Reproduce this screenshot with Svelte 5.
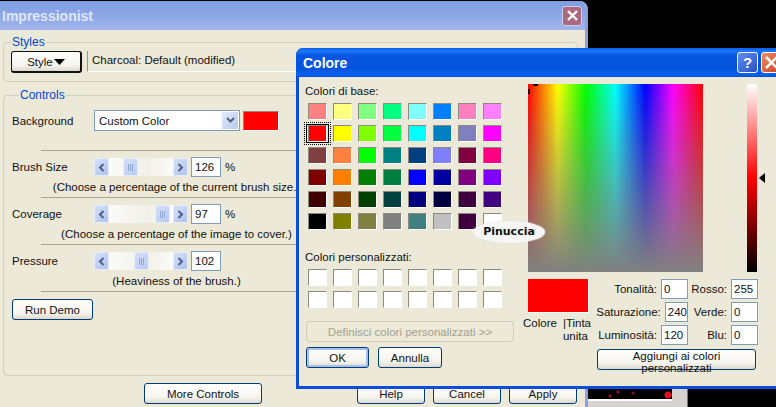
<script>
    const basic = [
        '#ff8080', '#ffff80', '#80ff80', '#00ff80', '#80ffff', '#0080ff', '#ff80c0', '#ff80ff',
        '#ff0000', '#ffff00', '#80ff00', '#00ff40', '#00ffff', '#0080c0', '#8080c0', '#ff00ff',
        '#804040', '#ff8040', '#00ff00', '#008080', '#004080', '#8080ff', '#800040', '#ff0080',
        '#800000', '#ff8000', '#008000', '#008040', '#0000ff', '#0000a0', '#800080', '#8000ff',
        '#400000', '#804000', '#004000', '#004040', '#000080', '#000040', '#400040', '#400080',
        '#000000', '#808000', '#808040', '#808080', '#408080', '#c0c0c0', '#400040', '#ffffff'
    ];
    const custom = Array(16).fill('#ffffff');

    const sliders = [
        { label: 'Brush Size', pos: 14, value: '126', unit: '%', hint: '(Choose a percentage of the current brush size.)' },
        { label: 'Coverage', pos: 46, value: '97', unit: '%', hint: '(Choose a percentage of the image to cover.)' },
        { label: 'Pressure', pos: 25, value: '102', unit: '', hint: '(Heaviness of the brush.)' }
    ];

    const hsl = [['Tonalità:', '0'], ['Saturazione:', '240'], ['Luminosità:', '120']];
    const rgb = [['Rosso:', '255'], ['Verde:', '0'], ['Blu:', '0']];
</script>

<div class="desktop">
    <div class="backdrop">
        <div class="thumbs"></div>
        <div class="strip"></div>
    </div>

    <div class="window main">
        <div class="titlebar inactive">
            <span class="title">Impressionist</span>
            <span class="close faded">
                <svg width="13" height="13" viewBox="0 0 13 13"><path d="M2 2l9 9M11 2l-9 9" stroke="#fff" stroke-width="2.4" /></svg>
            </span>
        </div>
        <div class="main-body">
            <fieldset class="group styles">
                <legend>Styles</legend>
                <div class="style-row">
                    <button class="btn dark style-btn">Style<svg width="11" height="6" viewBox="0 0 11 6"><path d="M0 0h11L5.500 6z" fill="#000" /></svg></button>
                    <div class="style-name">Charcoal: Default (modified)</div>
                </div>
            </fieldset>

            <fieldset class="group controls">
                <legend>Controls</legend>
                <div class="bg-row">
                    <span class="label">Background</span>
                    <div class="combo">
                        <span>Custom Color</span>
                        <span class="combo-btn">
                            <svg width="9" height="7" viewBox="0 0 9 7"><path d="M1 1l3.500 3.500L8 1" fill="none" stroke="#4d6185" stroke-width="2" /></svg>
                        </span>
                    </div>
                    <div class="bg-swatch"></div>
                </div>
                {#each sliders as s}
                    <div class="sep"></div>
                    <div class="slider-block">
                        <div class="slider-row">
                            <span class="label">{s.label}</span>
                            <span class="sb-btn">
                                <svg width="7" height="9" viewBox="0 0 7 9"><path d="M5.500 1L2 4.500 5.500 8" fill="none" stroke="#4d6185" stroke-width="2" /></svg>
                            </span>
                            <div class="track">
                                <span class="thumb" style="margin-left: {s.pos}px">
                                    <svg width="6" height="7" viewBox="0 0 6 7"><path d="M.5 0v7M2.500 0v7M4.500 0v7" stroke="#8fa6d0" /></svg>
                                </span>
                            </div>
                            <span class="sb-btn">
                                <svg width="7" height="9" viewBox="0 0 7 9"><path d="M1.500 1L5 4.500 1.500 8" fill="none" stroke="#4d6185" stroke-width="2" /></svg>
                            </span>
                            <span class="field slider-field">{s.value}</span>
                            <span class="unit">{s.unit}</span>
                        </div>
                        <div class="hint">{s.hint}</div>
                    </div>
                {/each}
                <div class="sep"></div>
                <button class="btn run">Run Demo</button>
            </fieldset>

            <div class="main-actions">
                <button class="btn more">More Controls</button>
                <button class="btn act">Help</button>
                <button class="btn act">Cancel</button>
                <button class="btn act">Apply</button>
            </div>
        </div>
    </div>

    <div class="window dialog">
        <div class="titlebar active">
            <span class="title">Colore</span>
            <span class="help">?</span>
            <span class="close red">
                <svg width="15" height="15" viewBox="0 0 15 15"><path d="M2 2l11 11M13 2L2 13" stroke="#fff" stroke-width="2.6" /></svg>
            </span>
        </div>
        <div class="dialog-body">
            <div class="left">
                <div class="cap">Colori di base:</div>
                <div class="swatches">
                    {#each basic as c, i}
                        <span class="swatch" class:selected={i === 8} style="background: {c}"></span>
                    {/each}
                </div>
                <div class="cap custom-cap">Colori personalizzati:</div>
                <div class="swatches">
                    {#each custom as c}
                        <span class="swatch" style="background: {c}"></span>
                    {/each}
                </div>
                <button class="btn define" disabled>Definisci colori personalizzati &gt;&gt;</button>
                <div class="ok-row">
                    <button class="btn ok">OK</button>
                    <button class="btn cancel">Annulla</button>
                </div>
            </div>
            <div class="right">
                <div class="picker">
                    <div class="spectrum">
                        <span class="cross h"></span>
                        <span class="cross v"></span>
                    </div>
                    <div class="lum"></div>
                    <svg class="lum-arrow" width="6" height="10" viewBox="0 0 6 10"><path d="M6 0v10L0 5z" fill="#000" /></svg>
                </div>
                <div class="lower">
                    <div class="preview-col">
                        <div class="preview"></div>
                        <div class="preview-labels">
                            <span>Colore</span>
                            <span>|Tinta<br /><span class="indent">unita</span></span>
                        </div>
                    </div>
                    <div class="values">
                        <div class="value-cols">
                            <div class="value-col first">
                                {#each hsl as [name, val]}
                                    <div class="value-row"><span class="value-name">{name}</span><span class="field">{val}</span></div>
                                {/each}
                            </div>
                            <div class="value-col">
                                {#each rgb as [name, val]}
                                    <div class="value-row"><span class="value-name">{name}</span><span class="field">{val}</span></div>
                                {/each}
                            </div>
                        </div>
                        <button class="btn add">Aggiungi ai colori personalizzati</button>
                    </div>
                </div>
            </div>
        </div>
    </div>

    <div class="stamp">Pinuccia</div>
</div>

<style>
    :global(body) {
        margin: 0;
    }

    .desktop {
        position: relative;
        width: 776px;
        height: 407px;
        overflow: hidden;
        background: #000;
        font-family: "Liberation Sans", sans-serif;
        font-size: 11.5px;
        color: #111;
    }

    .backdrop {
        position: absolute;
        left: 586px;
        top: 388px;
        width: 102px;
        height: 19px;
        background: #d6d3ce;
        border-right: 1px solid #777;
        box-sizing: border-box;
    }

    .thumbs {
        height: 11px;
        margin-left: 2px;
        margin-right: 15px;
        background:
            radial-gradient(circle at 80px 7px, #e01020 3px, transparent 4px),
            radial-gradient(circle at 30px 4px, #a01018 1px, transparent 2px),
            radial-gradient(circle at 22px 8px, #a01018 1px, transparent 2px),
            radial-gradient(circle at 45px 5px, #901018 1px, transparent 2px),
            #000;
        border-bottom: 2px solid #fff;
        box-sizing: content-box;
    }

    .strip {
        height: 6px;
    }

    .window {
        position: absolute;
        box-sizing: border-box;
    }

    .main {
        left: 0;
        top: 1px;
        width: 588px;
        height: 407px;
        background: #ece9d8;
        border-right: 3px solid #8a9fe0;
        border-top-right-radius: 8px;
        overflow: hidden;
    }

    .titlebar {
        display: flex;
        align-items: center;
        color: #fff;
        font-weight: 700;
    }

    .inactive {
        height: 29px;
        padding: 0 3px 0 2px;
        background: linear-gradient(#7f9de0, #8aa5e6 40%, #a0b5ea);
        color: #dfe7f8;
    }

    .inactive .title {
        font-size: 14px;
        flex: 1;
    }

    .close {
        display: flex;
        align-items: center;
        justify-content: center;
        box-sizing: border-box;
        border-radius: 3px;
    }

    .faded {
        width: 20px;
        height: 20px;
        background: #ac6a80;
        border: 1px solid #c9cfe9;
    }

    .main-body {
        display: flex;
        flex-direction: column;
        padding: 6px 0 0 3px;
    }

    .group {
        margin: 0;
        padding: 0;
        border: 1px solid #d0d0bf;
        border-radius: 4px;
        box-sizing: border-box;
    }

    legend {
        margin-left: 7px;
        padding: 0 1px;
        color: #0046d5;
        font-size: 12px;
        line-height: 13px;
    }

    .styles {
        height: 46px;
        width: 575px;
    }

    .style-row {
        display: flex;
        gap: 5px;
        padding-left: 7px;
        margin-top: 2px;
    }

    .btn {
        font: inherit;
        color: #111;
        box-sizing: border-box;
        padding: 0;
        background: linear-gradient(#fff, #f5f4ee 70%, #dcd8cc);
        border: 1px solid #003c74;
        border-radius: 3px;
    }

    .dark {
        border-color: #111;
        border-width: 1px 2px 2px 1px;
    }

    .style-btn {
        display: flex;
        align-items: center;
        justify-content: center;
        gap: 1px;
        width: 71px;
        height: 22px;
    }

    .style-name {
        flex: 1;
        height: 20px;
        line-height: 18px;
        padding-left: 4px;
        border-left: 1px solid #9a988a;
        border-bottom: 1px solid #fff;
    }

    .controls {
        margin-top: 7px;
        height: 287px;
        width: 575px;
        padding-left: 8px;
    }

    .bg-row {
        display: flex;
        align-items: center;
        height: 21px;
        margin-top: 8px;
    }

    .label {
        width: 82px;
        flex: none;
    }

    .combo {
        display: flex;
        align-items: center;
        justify-content: space-between;
        box-sizing: border-box;
        width: 146px;
        height: 21px;
        padding: 1px 1px 1px 4px;
        background: #fff;
        border: 1px solid #7f9db9;
    }

    .combo-btn {
        display: flex;
        align-items: center;
        justify-content: center;
        width: 16px;
        height: 100%;
        background: linear-gradient(135deg, #e3ebfb, #b8c9ee);
    }

    .bg-swatch {
        width: 36px;
        height: 20px;
        margin-left: 3px;
        box-sizing: border-box;
        background: #ff0000;
        border: 1px solid #8e8c80;
        border-right-color: #fff;
        border-bottom-color: #fff;
    }

    .sep {
        height: 1px;
        margin-left: 29px;
        background: #a5a497;
    }

    .bg-row + .sep {
        margin-top: 19px;
    }

    .slider-block {
        padding-top: 6px;
    }

    .slider-row {
        display: flex;
        align-items: center;
        height: 20px;
    }

    .sb-btn {
        display: flex;
        align-items: center;
        justify-content: center;
        box-sizing: border-box;
        width: 15px;
        height: 18px;
        background: linear-gradient(135deg, #d5e1f9, #aec2ee);
        border: 1px solid #e6eefc;
        border-radius: 2px;
    }

    .track {
        display: flex;
        align-items: center;
        width: 64px;
        height: 18px;
        background: linear-gradient(90deg, #fbfbf9, #f1f0e8 60%, #fbfbf9);
    }

    .thumb {
        display: flex;
        align-items: center;
        justify-content: center;
        box-sizing: border-box;
        width: 15px;
        height: 18px;
        background: linear-gradient(135deg, #d5e1f9, #b8caf0);
        border: 1px solid #e6eefc;
        border-radius: 2px;
    }

    .field {
        display: block;
        box-sizing: border-box;
        width: 27px;
        height: 20px;
        line-height: 18px;
        padding-left: 2px;
        background: #fff;
        border: 1px solid #7f9db9;
    }

    .slider-field {
        width: 30px;
        margin-left: 3px;
        padding-left: 3px;
    }

    .unit {
        margin-left: 4px;
    }

    .hint {
        width: 310px;
        text-align: center;
        line-height: 14px;
        margin-top: 3px;
        margin-bottom: 3px;
        padding-left: 19px;
        box-sizing: border-box;
    }

    .run {
        display: block;
        width: 81px;
        height: 21px;
        margin: 7px 0 0 0;
    }

    .main-actions {
        display: flex;
        padding-left: 141px;
        margin-top: 7px;
    }

    .more {
        width: 118px;
        height: 21px;
        margin-right: 95px;
    }

    .act {
        width: 68px;
        height: 21px;
        margin-right: 8px;
    }

    .dialog {
        left: 296px;
        top: 48px;
        width: 490px;
        height: 341px;
        background: #ece9d8;
        border: 3px solid #0a4ddc;
        border-top: none;
        border-radius: 7px 7px 0 0;
        display: flex;
        flex-direction: column;
    }

    .active {
        height: 29px;
        margin: 0 -3px;
        padding: 0 0 0 7px;
        gap: 3px;
        background: linear-gradient(#0a5be8 0, #1a7afc 3px, #0756e2 7px, #0453dc 70%, #0a62f0 92%, #0550d8);
        border-radius: 7px 7px 0 0;
    }

    .active .title {
        font-size: 14px;
        flex: 1;
    }

    .help {
        box-sizing: border-box;
        width: 21px;
        height: 21px;
        text-align: center;
        line-height: 19px;
        font-size: 15px;
        background: linear-gradient(135deg, #5f8cf0, #2a52c8);
        border: 1px solid #fff;
        border-radius: 3px;
    }

    .red {
        width: 25px;
        height: 21px;
        justify-content: flex-start;
        padding-left: 2px;
        background: linear-gradient(135deg, #ec8a64, #c83c18);
        border: 1px solid #fff;
    }

    .dialog-body {
        display: flex;
        padding-left: 6px;
    }

    .left {
        width: 223px;
        flex: none;
        padding-top: 7px;
    }

    .cap {
        line-height: 14px;
    }

    .swatches {
        display: grid;
        grid-template-columns: repeat(8, 19px);
        grid-auto-rows: 17px;
        column-gap: 6px;
        row-gap: 5px;
        margin: 5px 0 0 3px;
    }

    .custom-cap {
        margin-top: 20px;
    }

    .swatch {
        position: relative;
        box-sizing: border-box;
        border: 1px solid;
        border-color: #8d8b80 #fff #fff #8d8b80;
    }

    .selected::after {
        content: '';
        position: absolute;
        inset: -2px -3px -2px -3px;
        border: 1px solid #000;
    }

    .selected::before {
        content: '';
        position: absolute;
        inset: -4px -5px -4px -5px;
        border: 1px dotted #000;
    }

    .define {
        display: block;
        width: 208px;
        height: 21px;
        margin: 13px 0 0 1px;
        background: #ece9d8;
        color: #a3a193;
        border-color: #cfcdbd;
    }

    .ok-row {
        display: flex;
        gap: 9px;
        margin: 5px 0 0 1px;
    }

    .ok {
        width: 63px;
        height: 21px;
        box-shadow: inset 0 0 0 2px #a9c0ec;
    }

    .cancel {
        width: 64px;
        height: 21px;
    }

    .right {
        flex: none;
        width: 240px;
    }

    .picker {
        display: flex;
        align-items: center;
        padding: 7px 0 0 0;
    }

    .spectrum {
        position: relative;
        width: 175px;
        height: 188px;
        background:
            linear-gradient(rgba(128, 128, 128, 0), #808080),
            linear-gradient(90deg, #ff0000, #ffff00 17%, #00ff00 33%, #00ffff 50%, #0000ff 67%, #ff00ff 83%, #ff0000);
    }

    .cross {
        position: absolute;
        background: #000;
    }

    .cross.h {
        left: 5px;
        top: 0;
        width: 5px;
        height: 2px;
    }

    .cross.v {
        left: 0;
        top: 5px;
        width: 2px;
        height: 5px;
    }

    .lum {
        width: 10px;
        height: 188px;
        margin-left: 44px;
        background: linear-gradient(#fff, #ff0000 50%, #000);
    }

    .lum-arrow {
        margin-left: 2px;
    }

    .lower {
        display: flex;
        margin-top: 7px;
        margin-left: -5px;
    }

    .preview-col {
        width: 74px;
        flex: none;
    }

    .preview {
        width: 61px;
        height: 34px;
        margin-left: 5px;
        background: #ff0000;
        border-right: 1px solid #fff;
        border-bottom: 1px solid #fff;
        box-sizing: border-box;
    }

    .preview-labels {
        display: flex;
        gap: 6px;
        margin-top: 4px;
        line-height: 13px;
    }

    .indent {
        padding-left: 0;
    }

    .values {
        display: flex;
        flex-direction: column;
    }

    .value-cols {
        display: flex;
    }

    .value-col {
        display: flex;
        flex-direction: column;
        gap: 3px;
        width: 70px;
    }

    .value-col.first {
        width: 91px;
    }

    .value-row {
        display: flex;
        justify-content: flex-end;
        align-items: center;
        gap: 4px;
    }

    .add {
        width: 159px;
        height: 21px;
        margin-top: 4px;
    }

    .stamp {
        position: absolute;
        left: 473px;
        top: 221px;
        width: 72px;
        height: 22px;
        border-radius: 50%;
        background: #f6f6f6;
        box-shadow: 0 0 2px #ddd;
        text-align: center;
        line-height: 22px;
        font-family: "DejaVu Sans", sans-serif;
        font-size: 11px;
        font-weight: 700;
        color: #111;
    }
</style>
